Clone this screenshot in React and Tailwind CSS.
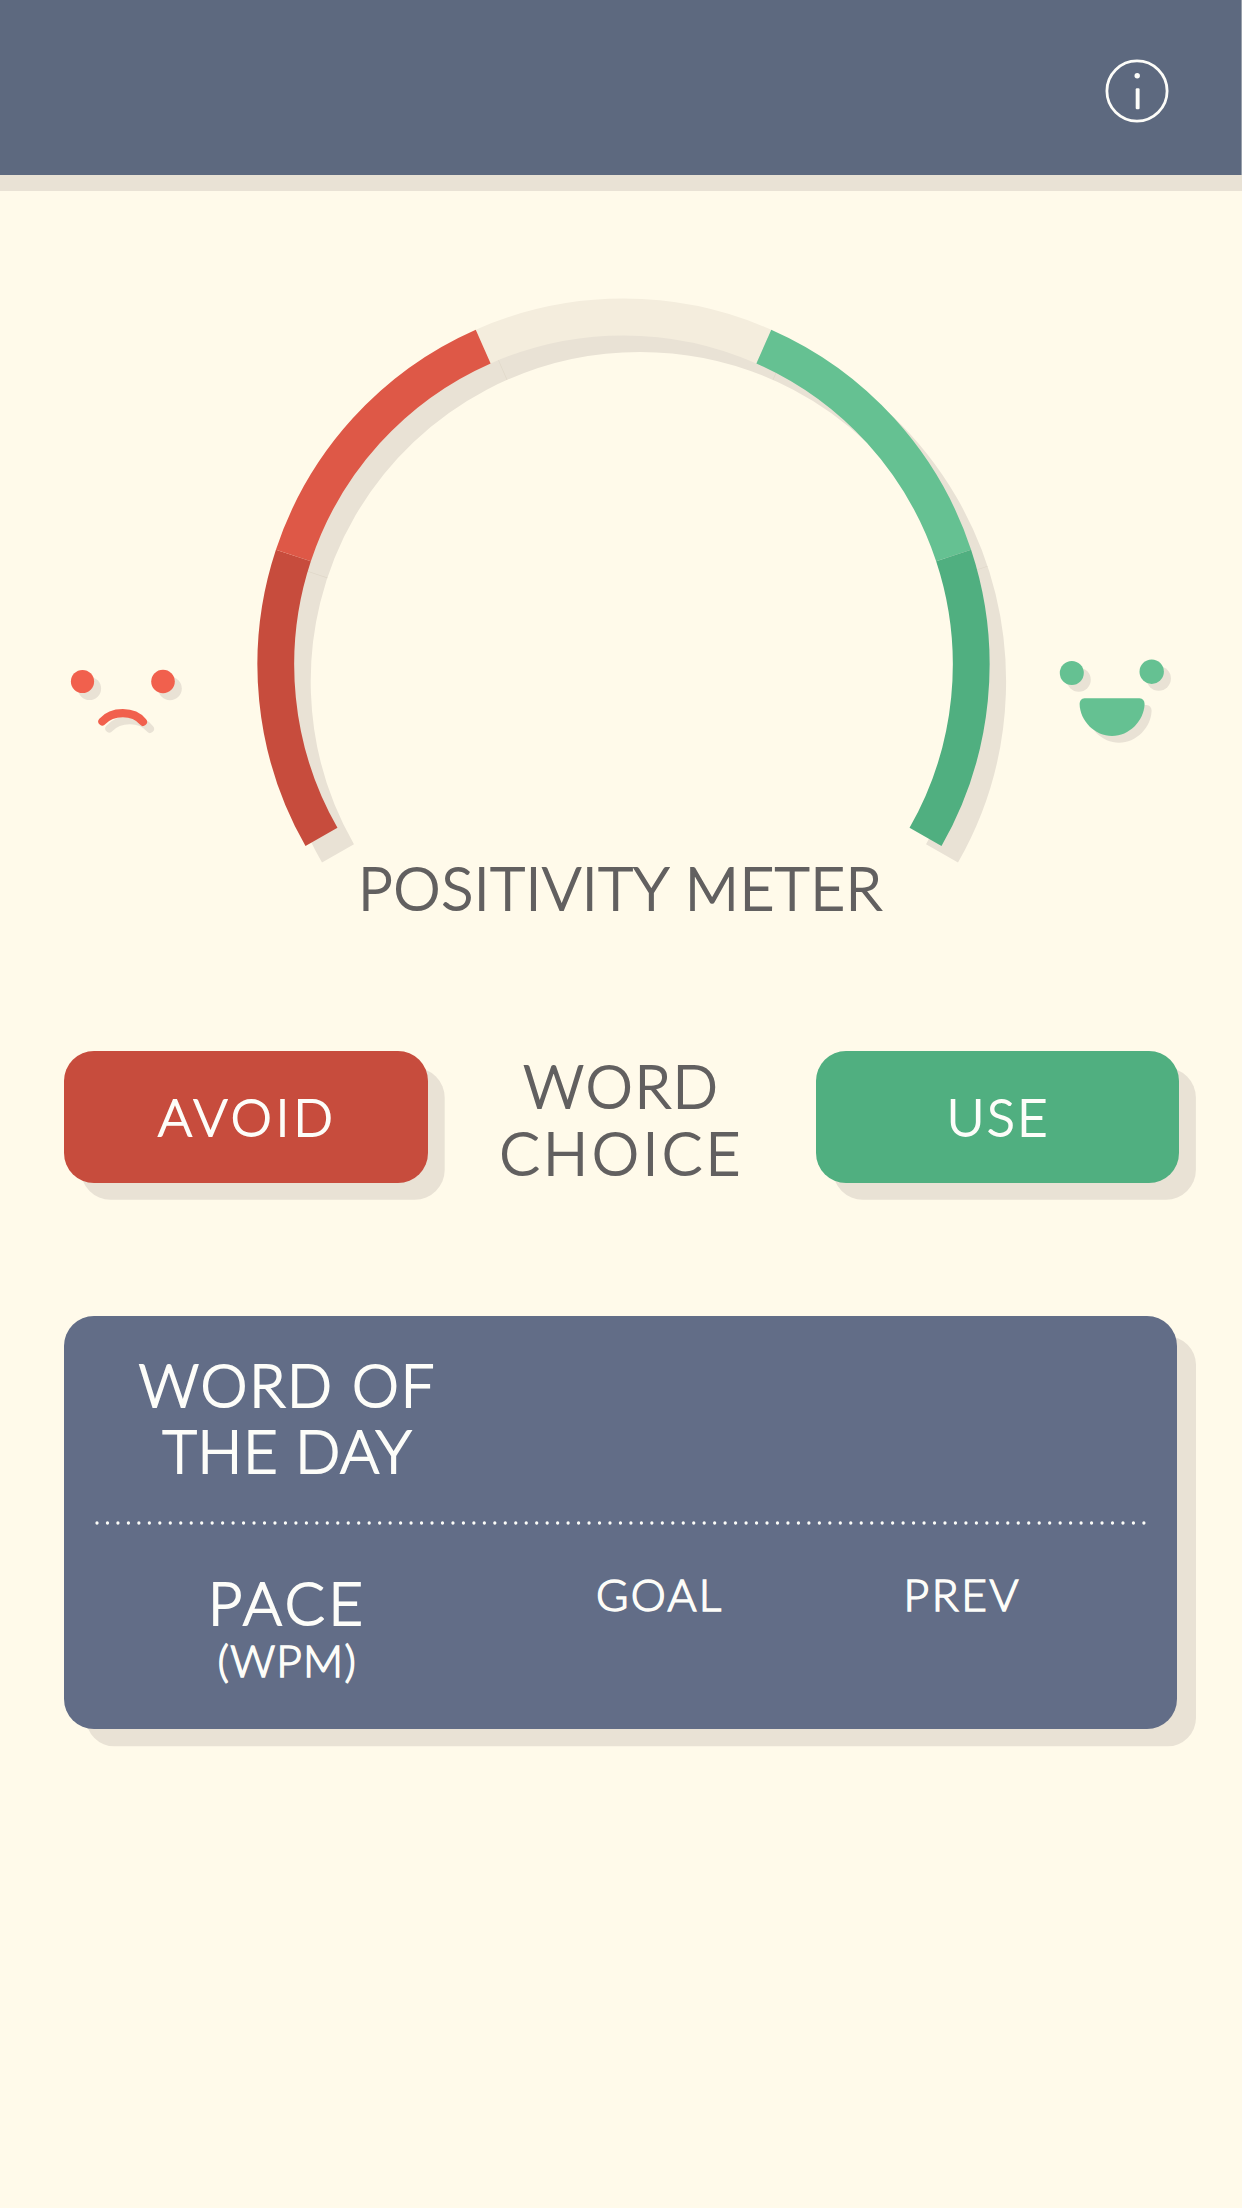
const CX = 623.5;
const CY = 664.7;
const R = 347.7;

function arc(from, to) {
  const pt = (deg) => {
    const a = (deg * Math.PI) / 180;
    return `${(CX + R * Math.cos(a)).toFixed(2)} ${(CY - R * Math.sin(a)).toFixed(2)}`;
  };
  return `M${pt(from)} A${R} ${R} 0 0 1 ${pt(to)}`;
}

const SEGMENTS = [
  { from: 209.7, to: 161.7, color: "#c74c3d" },
  { from: 161.7, to: 113.8, color: "#de5847" },
  { from: 66.2, to: 18.3, color: "#65c192" },
  { from: 18.3, to: -29.7, color: "#50af80" },
];

const SEAMS = [161.7, 113.8, 66.2, 18.3];

function Gauge() {
  return (
    <svg className="block h-[573px] w-[760px] shrink-0" viewBox="250 290 760 573" fill="none" strokeWidth="36.8">
      <g transform="translate(16.5 16.5)">
        <path d={`${arc(209.7, 90)} ${arc(90, -29.7).replace(/^M\S+ \S+ /, "")}`} stroke="#e9e2d5" />
        {SEAMS.map((a) => (
          <path key={a} d={arc(a + 0.05, a - 0.05)} stroke="#dfd7c8" />
        ))}
      </g>
      <path d={arc(113.8, 66.2)} stroke="#f4eddd" />
      {SEGMENTS.map((s) => (
        <path key={s.color} d={arc(s.from, s.to)} stroke={s.color} />
      ))}
    </svg>
  );
}

function SadFace() {
  const mouth = "M102.4 721.4C112 710.6 133.5 710 142.9 721.8";
  return (
    <svg className="mt-[370px] block h-20 w-[126px] shrink-0" viewBox="64 660 126 80" fill="none">
      <g transform="translate(7 7)">
        <circle cx="82.5" cy="681.5" r="11.6" fill="#e9e2d5" />
        <circle cx="163" cy="681.5" r="11.8" fill="#e9e2d5" />
        <path d={mouth} stroke="#e9e2d5" strokeWidth="8.2" strokeLinecap="round" />
      </g>
      <circle cx="82.5" cy="681.5" r="11.6" fill="#f1604d" />
      <circle cx="163" cy="681.5" r="11.8" fill="#f1604d" />
      <path d={mouth} stroke="#f1604d" strokeWidth="8.2" strokeLinecap="round" />
    </svg>
  );
}

function HappyFace() {
  const mouth =
    "M1084.5 698.2H1139.5Q1144.5 698.6 1144.6 704C1144 721 1129 736 1112 736C1095 736 1080 721 1079.6 704Q1079.7 698.6 1084.5 698.2Z";
  return (
    <svg className="mt-[360px] block h-[95px] w-[130px] shrink-0" viewBox="1050 650 130 95">
      <g fill="#e9e2d5" transform="translate(7 6.8)">
        <circle cx="1071.8" cy="673" r="12" />
        <circle cx="1151.7" cy="671.7" r="12.2" />
        <path d={mouth} />
      </g>
      <g fill="#65c192">
        <circle cx="1071.8" cy="673" r="12" />
        <circle cx="1151.7" cy="671.7" r="12.2" />
        <path d={mouth} />
      </g>
    </svg>
  );
}

function InfoIcon() {
  return (
    <svg className="block size-16" viewBox="0 0 64 64" fill="none">
      <circle cx="32" cy="32" r="30.1" stroke="#fdfdf9" strokeWidth="2.8" />
      <circle cx="32.2" cy="16.8" r="2.7" fill="#fdfdf9" />
      <rect x="30.7" y="29.2" width="3.9" height="21" rx="1.2" fill="#fdfdf9" />
    </svg>
  );
}

const LG = "text-[59.2px] [-webkit-text-stroke-width:2px]";
const MD = "text-[51.8px] [-webkit-text-stroke-width:1.8px]";
const SM = "text-[44.2px] leading-[48px] [-webkit-text-stroke-width:1.5px]";

export default function App() {
  return (
    <div className="h-[2208px] w-[1242px] overflow-hidden bg-[#fffaea] font-['Lato',sans-serif] font-light whitespace-nowrap">
      <header className="flex h-[175px] justify-end border-r border-[#98a0ab] bg-[#5d697f] pt-[58.7px] pr-[71.7px]">
        <InfoIcon />
      </header>
      <div className="h-4 bg-[#e9e2d5]" />
      <section className="text-[#626060]">
        <div className="flex items-start pt-[99px] pl-16">
          <SadFace />
          <div className="ml-[60px]">
            <Gauge />
          </div>
          <div className="ml-10">
            <HappyFace />
          </div>
        </div>
        <h1 className={`pt-px pr-[1px] text-center leading-[48px] tracking-[1.03px] ${LG}`}>POSITIVITY METER</h1>
      </section>
      <section className="mt-[138.5px] ml-[64.3px] flex h-[134px] w-[1114.6px] items-start justify-between">
        <button className={`h-[132.5px] w-[363.4px] rounded-[30px] bg-[#c74c3d] pt-px pr-px pl-1 tracking-[4.1px] text-[#fdfdf9] shadow-[16.7px_16.7px_0_#e9e2d5] ${MD}`}>
          AVOID
        </button>
        <h2 className={`pt-px text-center leading-[67px] text-[#626060] ${LG}`}>
          <div className="tracking-[2.2px]">WORD</div>
          <div className="tracking-[3.9px]">CHOICE</div>
        </h2>
        <button className={`h-[132.5px] w-[363.1px] rounded-[30px] bg-[#50af80] pt-px pl-[2px] tracking-[2.6px] text-[#fdfdf9] shadow-[16.9px_16.7px_0_#e9e2d5] ${MD}`}>
          USE
        </button>
      </section>
      <section className="mt-[131.5px] ml-[64.3px] h-[412.7px] w-[1112.5px] rounded-[30px] bg-[#626d87] pt-[36px] text-[#fdfdf9] shadow-[20.5px_18.8px_0_-1.5px_#e9e2d5]">
        <h2 className={`w-[446px] text-center leading-[66px] ${LG}`}>
          <div className="tracking-[1.9px]">WORD OF</div>
          <div className="tracking-[0.85px]">THE DAY</div>
        </h2>
        <svg className="mt-[36.5px] ml-[31px] block h-1 w-[1051px]" viewBox="0 0 1051 4">
          <path d="M2 2H1049" stroke="#fdfdf9" strokeWidth="3.3" strokeLinecap="round" strokeDasharray="0 10.469" />
        </svg>
        <div className="mt-[45px] grid grid-cols-[446px_299px_307px] text-center">
          <div>
            <div className={`leading-[66px] tracking-[3.8px] ${LG}`}>PACE</div>
            <div className={`tracking-[1.2px] ${SM}`}>(WPM)</div>
          </div>
          <div className={`tracking-[2.4px] ${SM}`}>GOAL</div>
          <div className={`pr-px tracking-[2.6px] ${SM}`}>PREV</div>
        </div>
      </section>
    </div>
  );
}
